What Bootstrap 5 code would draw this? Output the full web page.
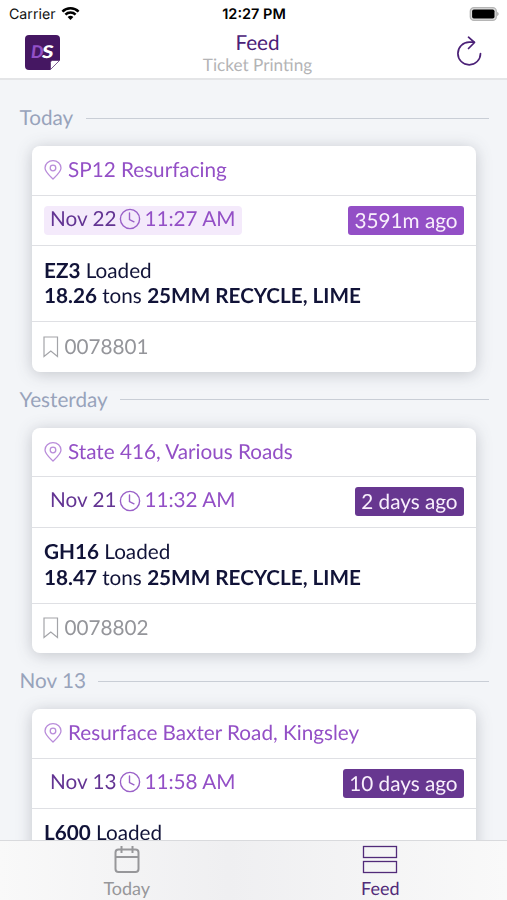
<!DOCTYPE html>
<html lang="en">
<head>
<meta charset="utf-8">
<meta name="viewport" content="width=device-width, initial-scale=1">
<title>Feed</title>
<link href="https://cdn.jsdelivr.net/npm/bootstrap@5.3.0/dist/css/bootstrap.min.css" rel="stylesheet">
<style>
body{font-family:Lato,sans-serif;font-size:20.7px;line-height:25px;color:#111338;background:#f3f5f8;text-rendering:geometricPrecision}
.app-top{height:80px;border-bottom:2px solid #e4e5e7}
.status{height:27px;font-family:Inter,sans-serif;font-size:14.2px;line-height:27px;color:#111;padding:1px 8px 0 9px}
.side{flex:1 1 0}
.clock{font-weight:600;font-size:14.5px;color:#000}
.titlebar{height:51px;padding:0 24px 0 25px}
.heading{padding:2px 0 0 7px}
.title{font-size:20.7px;line-height:22px;color:#4b2177}
.subtitle{font-size:17.2px;line-height:22px;color:#b4b4b6}
.feed{padding-top:10px}
.day{height:56px;padding:0 18px 0 19.5px;color:#98a3bb}
.day span{margin-top:1px}
.rule{height:1px;background:#c9ced6;margin-left:12.5px}
.ticket{margin:0 31px 0 32px;height:225.5px;border:0;border-radius:8px;overflow:hidden}
.shade{filter:drop-shadow(0 2px 8px rgba(40,45,60,.23))}
.line{padding:0 12px;border-bottom:1.5px solid #dfe0e4}
.site{height:49.5px;color:#934fc6;gap:6.5px;padding-left:11.5px}
.site span,.ref span{margin-top:1px}
.when{height:50.5px}
.load{height:76px;line-height:25.5px;padding-top:1px}
.ref{height:49.5px;border:0;color:#94959a;padding-left:10.5px;gap:6px}
.stamp{height:29px;line-height:27px;padding:0 7px 0 6px;border-radius:4px;color:#934fc6;gap:3px}
.stamp span{height:29px}
.stamp svg{margin-top:-2px}
.stamp-new{background:#f4eafb}
.stamp .date{color:#633493}
.ago{height:29px;line-height:31px;padding:0 6.5px;border-radius:3px;background:#934fc6;color:#f8effc}
.ago-old{background:#673790}
.tabs{height:60px;border-top:1px solid #d9dadd;background:linear-gradient(90deg,#f9f9f9,#efeff1 45%,#f9f9f9)}
.tab{font-size:18px;line-height:22px;color:#97979a;padding-top:4px}
.tab.on{color:#512a79}
svg{display:block;flex:none}
</style>
<script src="https://cdn.jsdelivr.net/npm/bootstrap@5.3.0/dist/js/bootstrap.bundle.min.js"></script>
</head>
<body>
<svg width="0" height="0" class="position-absolute" aria-hidden="true">
<symbol id="pin" viewBox="0 0 18 20"><g fill="none" stroke="#b98cda" stroke-width="1.3"><path d="M9 19C7 17 1 12 1 8a8 7.3 0 0 1 16 0C17 12 11 17 9 19Z"/><circle cx="9" cy="8" r="2.8"/></g></symbol>
<symbol id="time" viewBox="0 0 22 22"><g fill="none" stroke="#9a61c8" stroke-width="1.4" stroke-linecap="round"><circle cx="11" cy="11" r="9.6"/><path d="M10.5 5v6.500l4.500 2.300"/></g></symbol>
<symbol id="mark-icon" viewBox="0 0 16 22"><path d="M1 1h13.500v19.500L7.800 15 1 20.500Z" fill="none" stroke="#a3a4a8" stroke-width="1.2"/></symbol>
</svg>
<div class="d-flex flex-column vh-100 overflow-hidden">
<header class="app-top bg-white flex-shrink-0">
  <div class="status d-flex align-items-center">
    <div class="side d-flex align-items-center"><span>Carrier</span>
      <svg class="ms-1" width="20" height="14" viewBox="-1.500 0 20 14"><g fill="none" stroke="#000" stroke-width="2.500"><path d="M.9 4.600a11.500 11.500 0 0 1 16.200 0"/><path d="M3.900 7.700a7.200 7.200 0 0 1 10.200 0"/></g><path d="M9 13 6.100 10.100a4.100 4.100 0 0 1 5.800 0Z"/></svg></div>
    <div class="clock">12:27 PM</div>
    <div class="side d-flex justify-content-end"><svg width="30" height="14" viewBox="0 0 30 14"><rect x="1.300" y=".7" width="26" height="12.600" rx="3.600" fill="#ddd" stroke="#b5b5b5" stroke-width="1.300"/><rect x="3.100" y="2.400" width="22.400" height="9.200" rx="1.800" fill="#000"/><path d="M28.200 4.800q3 2.200 0 4.400Z" fill="#aaa"/></svg></div>
  </div>
  <div class="titlebar d-flex align-items-center">
    <div class="side"><svg width="35" height="35" viewBox="0 0 35 35"><path d="M4 0H31a4 4 0 0 1 4 4V25L25 35H4a4 4 0 0 1-4-4V4a4 4 0 0 1 4-4Z" fill="#451762"/><path d="M25.500 34.500v-7q0-2 2-2h7Z" fill="#fff" stroke="#451762" stroke-width=".6"/><text x="6" y="23.300" font-family="Lato,sans-serif" font-size="17.500" font-weight="900" font-style="italic" fill="#9250c7" textLength="12.500" lengthAdjust="spacingAndGlyphs">D</text><text x="17" y="23.300" font-family="Lato,sans-serif" font-size="17.500" font-weight="900" font-style="italic" fill="#fff" textLength="11.500" lengthAdjust="spacingAndGlyphs">S</text></svg></div>
    <div class="heading text-center"><div class="title">Feed</div><div class="subtitle">Ticket Printing</div></div>
    <div class="side d-flex justify-content-end"><svg width="28" height="33" viewBox="0 0 28 33"><g fill="none" stroke="#4b2177" stroke-width="1.700" stroke-linecap="round" stroke-linejoin="round"><path d="M25.500 17.500A11.300 11.300 0 1 1 14.200 6.200H19"/><path d="M13.500 1.200 19.500 6.500 13.500 12.500"/></g></svg></div>
  </div>
</header>
<main class="feed flex-fill overflow-hidden">
  <section>
    <div class="day d-flex align-items-center"><span>Today</span><div class="rule flex-fill"></div></div>
    <div class="shade"><article class="ticket card">
      <div class="line site d-flex align-items-center"><svg width="18" height="20"><use href="#pin"/></svg><span>SP12 Resurfacing</span></div>
      <div class="line when d-flex align-items-center justify-content-between"><div class="stamp stamp-new d-flex align-items-center"><span class="date">Nov 22</span><svg width="22" height="22"><use href="#time"/></svg><span>11:27 AM</span></div><span class="ago">3591m ago</span></div>
      <div class="line load d-flex flex-column justify-content-center"><div><b>EZ3</b> Loaded</div><div><b>18.26</b> tons <b>25MM RECYCLE, LIME</b></div></div>
      <div class="line ref d-flex align-items-center"><svg width="16" height="22"><use href="#mark-icon"/></svg><span>0078801</span></div>
    </article></div>
  </section>
  <section>
    <div class="day d-flex align-items-center"><span>Yesterday</span><div class="rule flex-fill"></div></div>
    <div class="shade"><article class="ticket card">
      <div class="line site d-flex align-items-center"><svg width="18" height="20"><use href="#pin"/></svg><span>State 416, Various Roads</span></div>
      <div class="line when d-flex align-items-center justify-content-between"><div class="stamp d-flex align-items-center"><span class="date">Nov 21</span><svg width="22" height="22"><use href="#time"/></svg><span>11:32 AM</span></div><span class="ago ago-old">2 days ago</span></div>
      <div class="line load d-flex flex-column justify-content-center"><div><b>GH16</b> Loaded</div><div><b>18.47</b> tons <b>25MM RECYCLE, LIME</b></div></div>
      <div class="line ref d-flex align-items-center"><svg width="16" height="22"><use href="#mark-icon"/></svg><span>0078802</span></div>
    </article></div>
  </section>
  <section>
    <div class="day d-flex align-items-center"><span>Nov 13</span><div class="rule flex-fill"></div></div>
    <div class="shade"><article class="ticket card">
      <div class="line site d-flex align-items-center"><svg width="18" height="20"><use href="#pin"/></svg><span>Resurface Baxter Road, Kingsley</span></div>
      <div class="line when d-flex align-items-center justify-content-between"><div class="stamp d-flex align-items-center"><span class="date">Nov 13</span><svg width="22" height="22"><use href="#time"/></svg><span>11:58 AM</span></div><span class="ago ago-old">10 days ago</span></div>
      <div class="line load pt-2"><div class="pt-1"><b>L600</b> Loaded</div></div>
    </article></div>
  </section>
</main>
<nav class="tabs d-flex flex-shrink-0">
  <div class="tab w-50 d-flex flex-column align-items-center"><svg width="28" height="32" viewBox="0 0 28 32"><g fill="none" stroke="#97979a" stroke-width="2"><rect x="2.500" y="4.500" width="23" height="22.500" rx="3"/><path d="M2.500 12h23M8.500 1v7M19.500 1v7"/></g></svg><span>Today</span></div>
  <div class="tab on w-50 d-flex flex-column align-items-center"><svg width="36" height="32" viewBox="0 0 36 32"><g fill="none" stroke="#512a79" stroke-width="1.300"><rect x="1.500" y="1.500" width="33" height="11"/><rect x="1.500" y="16.500" width="33" height="11"/></g></svg><span>Feed</span></div>
</nav>
</div>
</body>
</html>
